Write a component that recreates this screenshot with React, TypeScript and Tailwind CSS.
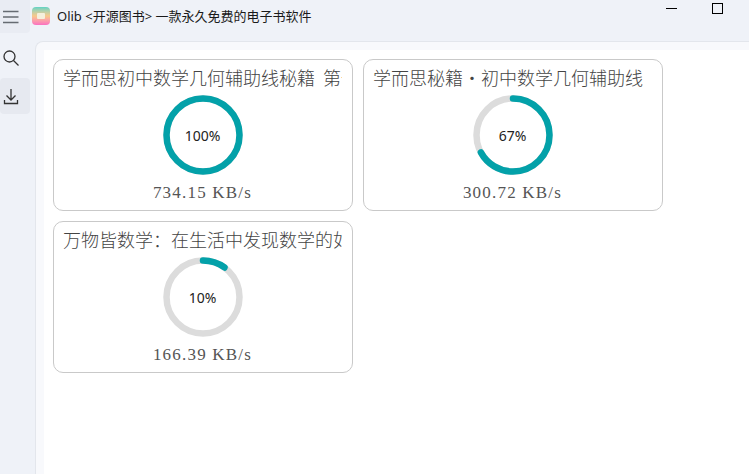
function Ring({ pct }: { pct: number }) {
  const r = 36.5;
  const c = 2 * Math.PI * r;
  return (
    <div className="relative w-20 h-20">
      <svg width="80" height="80" viewBox="0 0 80 80" className="-rotate-90">
        <circle cx="40" cy="40" r={r} fill="none" stroke="#dcdcdc" strokeWidth="6.5" />
        <circle
          cx="40"
          cy="40"
          r={r}
          fill="none"
          stroke="#03a1a9"
          strokeWidth="6.5"
          strokeLinecap="round"
          strokeDasharray={`${(c * pct) / 100} ${c}`}
        />
      </svg>
      <div className="absolute inset-0 flex items-center justify-center text-[14px] text-[#222] font-['Noto_Sans','Liberation_Sans',sans-serif]">
        {pct}%
      </div>
    </div>
  );
}

function Card({ title, pct, speed }: { title: string; pct: number; speed: string }) {
  return (
    <div className="w-[300px] h-[152px] rounded-[10px] border border-[#c9c9c9] bg-white pl-[9px] pr-[10px] pt-[4px] flex flex-col items-center">
      <div className="w-full h-[30px] overflow-hidden whitespace-nowrap text-[18px] leading-[26px] [word-spacing:4px] text-[#444] font-['Noto_Sans_CJK_SC',sans-serif] font-light">
        {title}
      </div>
      <div className="mt-[1px]">
        <Ring pct={pct} />
      </div>
      <div className="mt-[6px] text-[17px] leading-[24px] tracking-[1.2px] text-[#555] whitespace-nowrap font-['Liberation_Serif',serif]">{speed}</div>
    </div>
  );
}

export default function App() {
  return (
    <div className="w-[749px] h-[474px] overflow-hidden bg-[#eff2f8] flex flex-col font-['Noto_Sans','Noto_Sans_CJK_SC',sans-serif]">
      <header className="h-[41px] shrink-0 flex items-start relative">
        <div className="w-[30px] h-[33px] bg-[#e9ecf3] rounded-br-[4px] flex items-center pl-[2px]">
          <svg width="17" height="14" viewBox="0 0 17 14" fill="none" stroke="#666b72" strokeWidth="1.7">
            <path d="M1 1.5H16.5M1 7H16.5M1 12.5H16.5" />
          </svg>
        </div>
        <div className="ml-[2px] mt-[7px] w-[18px] h-[18px] rounded-[4px] bg-gradient-to-b from-[#5fd3c4] via-[#f8c98a] to-[#fb6fc0] flex items-center justify-center">
          <div className="w-[8px] h-[6px] bg-[#f5f0dc] rounded-[1px]" />
        </div>
        <div className="ml-[7px] mt-[7px] text-[13px] leading-[18px] text-[#1a1a1a] whitespace-nowrap">
          Olib &lt;开源图书&gt; 一款永久免费的电子书软件
        </div>
        <div className="absolute left-[666px] top-[8px] w-[11px] h-px bg-black" />
        <div className="absolute left-[712px] top-[3px] w-[11px] h-[11px] border border-black" />
      </header>
      <div className="flex flex-1 min-h-0">
        <aside className="w-[35px] shrink-0 flex flex-col">
          <div className="w-[30px] h-[37px] flex items-center pl-[3px] pb-[3px]">
            <svg width="16" height="16" viewBox="0 0 16 16" fill="none" stroke="#333" strokeWidth="1.3">
              <circle cx="6.5" cy="6.5" r="5.5" />
              <path d="M10.5 10.5L15.5 15.5" />
            </svg>
          </div>
          <div className="w-[30px] h-[36px] bg-[#e6e9f0] rounded-[4px] flex items-center pl-[3px]">
            <svg width="16" height="17" viewBox="0 0 16 17" fill="none" stroke="#333" strokeWidth="1.3">
              <path d="M8 1V11.5M3.5 7.5L8 12L12.5 7.5M1.5 12V15.5H14.5V12" />
            </svg>
          </div>
        </aside>
        <main className="flex-1 min-w-0 bg-[#f8f9fc] border-t border-l border-[#e3e6ec] rounded-tl-[8px] pl-[8px] pt-[8px]">
          <div className="h-full bg-white pl-[9px] pt-[9px] flex flex-wrap content-start gap-[10px]">
            <Card title="学而思初中数学几何辅助线秘籍 第一册" pct={100} speed="734.15 KB/s" />
            <Card title="学而思秘籍・初中数学几何辅助线" pct={67} speed="300.72 KB/s" />
            <Card title="万物皆数学：在生活中发现数学的如何" pct={10} speed="166.39 KB/s" />
          </div>
        </main>
      </div>
    </div>
  );
}
